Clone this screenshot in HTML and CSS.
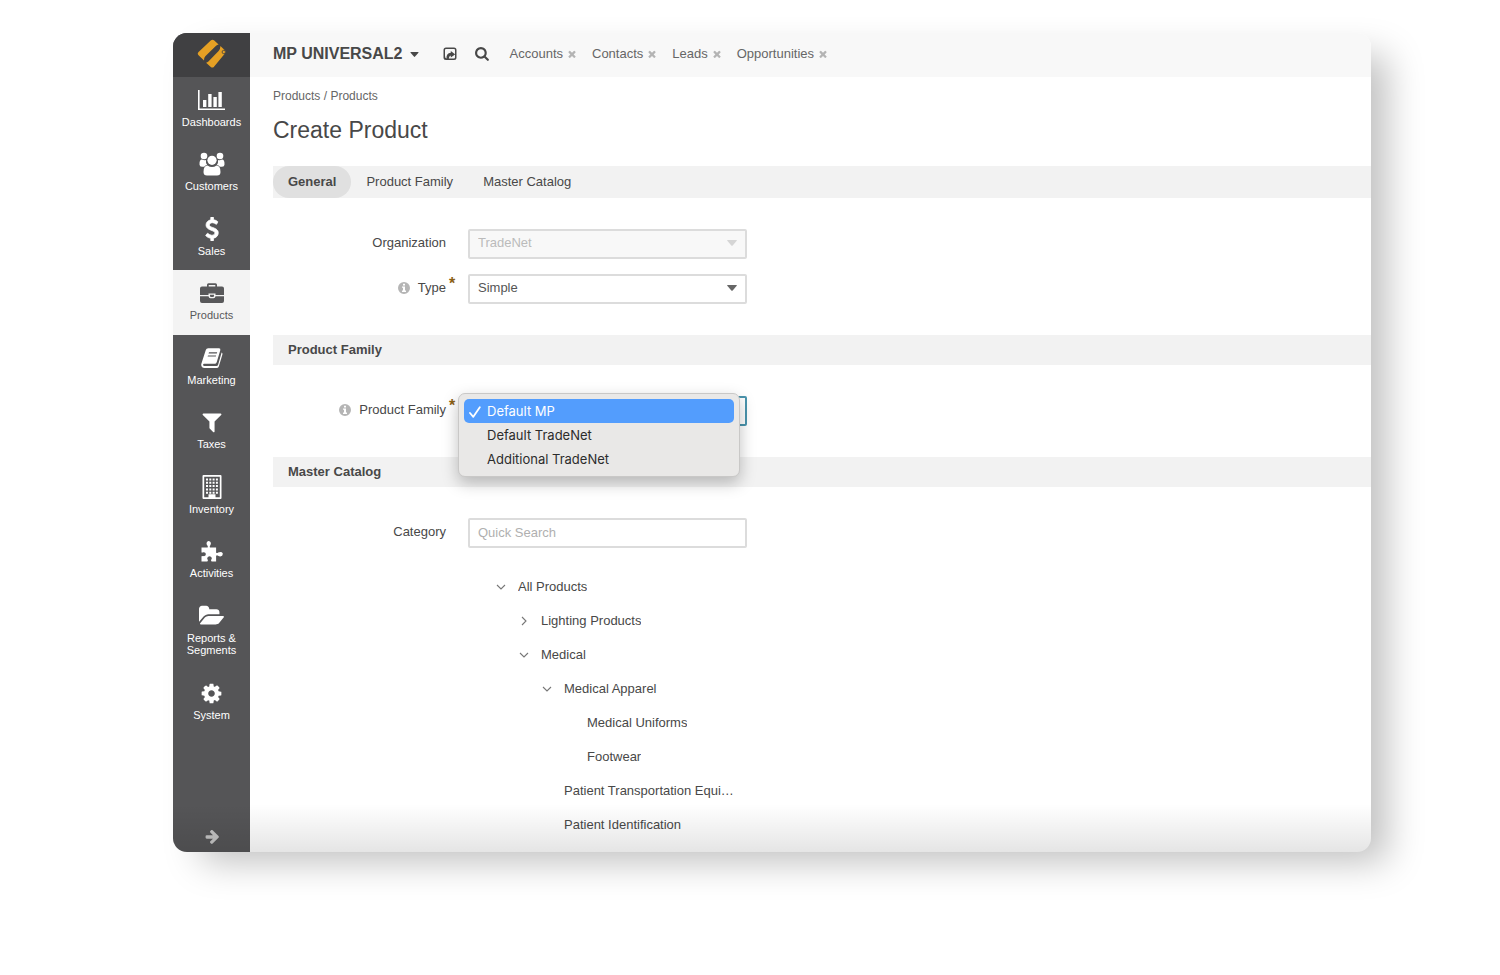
FILE: index.html
```html
<!DOCTYPE html>
<html lang="en">
<head>
<meta charset="utf-8">
<title>Create Product</title>
<link rel="stylesheet" href="styles.css">
</head>
<body>
<svg class="sprite" aria-hidden="true">
  <symbol id="times" viewBox="240 240 1310 1310"><path d="M1490 1322q0 40-28 68l-136 136q-28 28-68 28t-68-28l-294-294-294 294q-28 28-68 28t-68-28l-136-136q-28-28-28-68t28-68l294-294-294-294q-28-28-28-68t28-68l136-136q28-28 68-28t68 28l294 294 294-294q28-28 68-28t68 28l136 136q28 28 28 68t-28 68l-294 294 294 294q28 28 28 68z"/></symbol>
  <symbol id="caret" viewBox="0 0 10 6"><path d="M.7 0h8.6q.9 0 .4.8L5.7 5.5q-.7.7-1.4 0L.3.8Q-.2 0 .7 0z"/></symbol>
  <symbol id="info" viewBox="0 0 12 12"><path fill-rule="evenodd" d="M6 0a6 6 0 1 1 0 12A6 6 0 0 1 6 0zM5 1.8v1.700h2V1.800zM4 4.600v1.200h1v2.800H4v1.300h4V8.600H7v-4z"/></symbol>
  <symbol id="down" viewBox="0 0 10 10"><path d="M1 3l4 4 4-4" fill="none" stroke="currentColor" stroke-width="1.100"/></symbol>
  <symbol id="right" viewBox="0 0 10 10"><path d="M3 1l4 4-4 4" fill="none" stroke="currentColor" stroke-width="1.100"/></symbol>
</svg>
<div class="app">
  <aside class="sidebar">
    <a class="logo" href="#" aria-label="Home">
      <svg width="30" height="30" viewBox="0 0 30 30"><path fill="#e5a024" d="M1.300 13.200L14 1.300q1.500-1 3 0l4.600 4.200q-1.600.3-2.800 1.600L8.300 17.300q-1.700 2-1.300 4.200L1.300 16.100q-1.200-1.400 0-2.900z"/><path fill="#e5a024" d="M23.400 7l4.700 4.600q1 1.300 0 2.700L16.800 27.900q-1.500 1.300-3 0l-4.700-4.200q1.300-.3 2.300-1.300l10.200-10.500q1.900-2.200 1.800-4.900z"/><circle cx="26.800" cy="13" r="1.700" fill="#e5a024" stroke="#404042" stroke-width=".8"/></svg>
    </a>
    <nav>
      <ul class="menu">
        <li><a href="#"><svg width="27" height="20" viewBox="0 0 27 20"><path d="M0 0h1.600v18.400H27V20H0zM5 10h3.400v7H5zM10.200 4h3.400v13h-3.400zM15.400 7h3.400v10h-3.400zM20.400 2h3.400v15h-3.400z"/></svg><span>Dashboards</span></a></li>
        <li><a href="#"><svg width="26" height="24" viewBox="0 0 26 24"><circle cx="5" cy="4" r="3.300"/><circle cx="21" cy="4" r="3.300"/><path d="M.5 12.500Q.3 7.500 3 7.500q2 1 4 .4-.5 3 1.200 5.100-2 .2-3 1.700H3Q.5 14.700.5 12.500zM25.500 12.500q.2-5-2.500-5-2 1-4 .4.500 3-1.200 5.100 2 .2 3 1.700H23q2.500 0 2.500-2.200z"/><circle cx="13" cy="8.300" r="4.600"/><path d="M4.500 20q0-6.500 4-6.500 4.500 3 9 0 4 0 4 6.500 0 3.500-3.500 3.500H8q-3.500 0-3.500-3.500z"/></svg><span>Customers</span></a></li>
        <li><a href="#"><svg width="24" height="24" viewBox="0 0 1792 1792"><path stroke="currentColor" stroke-width="60" d="M1362 1185q0 153-99.500 263.500t-258.500 136.500v175q0 14-9 23t-23 9h-135q-13 0-22.500-9.500t-9.500-22.500v-175q-66-9-127.500-31t-101.500-44.500-74-48-46.500-37.500-17.500-18q-17-21-2-41l103-135q7-10 23-12 15-2 24 9l2 2q113 99 243 125 37 8 74 8 81 0 142.500-43t61.500-122q0-28-15-53t-33.500-42-58.500-37.500-66-32-80-32.500q-39-16-61.500-25t-61.500-26.500-62.500-31-56.500-35.500-53.500-42.500-43.500-49-35.500-58-21-66.500-8.500-78q0-138 98-242t255-134v-180q0-13 9.500-22.500t22.500-9.500h135q14 0 23 9t9 23v176q57 6 110.500 23t87 33.500 63.500 37.500 39 29 15 14q17 18 5 38l-81 146q-8 15-23 16-14 3-27-7-3-3-14.500-12t-39-26.500-58.500-32-74.500-26-85.500-11.500q-95 0-155 43t-60 111q0 26 8.500 48t29.500 41.500 39.500 33 56 31 60.500 27 70 27.500q53 20 81 31.500t76 35 75.500 42.500 62 50 53 63.500 31.500 76.500 13 94z"/></svg><span>Sales</span></a></li>
        <li><a href="#" class="active" aria-current="page"><svg width="24" height="20" viewBox="0 0 24 20"><path fill-rule="evenodd" d="M7 3.500V1.800Q7 .3 8.500.3h7q1.500 0 1.500 1.500v1.700h5q2 0 2 2V12h-8.500v-1.500h-7V12H0V5.500q0-2 2-2zm1.700 0h6.600V2H8.700zM0 13.200h8.500q.3 2 2 2h3q1.700 0 2-2H24V18q0 2-2 2H2q-2 0-2-2zM10 11.700h4V13q0 1-1 1h-2q-1 0-1-1z"/></svg><span>Products</span></a></li>
        <li><a href="#"><svg width="22" height="20" viewBox="0 0 22 20"><path fill-rule="evenodd" d="M7.200.2H18q1.800.2 1.300 2l-3.600 12q-.5 1.600-2 1.600H3.200q-1.500 0-1 1.400.3.900 1.600.9h11.700q1.200 0 1.700-1.500L20.600 4.500q1.200.6.800 2l-3.600 12Q17.300 20 15.600 20H3.500Q.5 20 .2 17q0-1 .4-2L4.800 2Q5.300.3 7.200.2zm.8 4-.4 1.200h8.200l.4-1.200zM7 7.400l-.4 1.200h8.200l.4-1.200z"/></svg><span>Marketing</span></a></li>
        <li><a href="#"><svg width="24" height="24" viewBox="0 0 1792 1792"><path d="M1595 295q17 41-14 70l-493 493v742q0 42-39 59-13 5-25 5-27 0-45-19l-256-256q-19-19-19-45v-486l-493-493q-31-29-14-70 17-39 59-39h1280q42 0 59 39z"/></svg><span>Taxes</span></a></li>
        <li><a href="#"><svg width="20" height="24" viewBox="0 0 20 24"><path fill-rule="evenodd" d="M1.500 0h17q1 0 1 1v22q0 1-1 1h-17q-1 0-1-1V1q0-1 1-1zM2.200 1.700v20.600h4.300v-3h7v3h4.300V1.700z"/><path fill="none" stroke="currentColor" stroke-width="2" stroke-dasharray="2 1.300" d="M4 4.500h13M4 7.800h13M4 11.100h13M4 14.400h13M4 17.700h13"/></svg><span>Inventory</span></a></li>
        <li><a href="#"><svg width="22" height="22" viewBox="0 0 22 22"><path d="M.5 7.500h6q.8-.7-.3-2.200Q5 3.500 6 2q1.500-1.800 3.200-.2Q10.500 3.400 9.300 5.300q-1 1.500-.2 2.200h6v5q.7 1 2 0 3.500-1.500 4.600.8.500 3-2.400 3.300-1.300 0-2.200-.8-1.400-1-2 .2v5.500h-4.400q-1.200-.8-.2-2.200.8-1.300-.6-2.500-1.600-1-3 .2-1.200 1.200-.3 2.500.7 1.400-.4 2H.5v-5.200q1-.2 1.800-.2 2.600.4 2.600-2.100-.4-2.200-2.600-1.800-1 .4-1.800.2z"/></svg><span>Activities</span></a></li>
        <li><a href="#"><svg width="25" height="24" viewBox="0 0 1879 1792"><path d="M1879 952q0 31-31 66l-336 396q-43 51-120.500 86.500t-143.500 35.500h-1088q-34 0-60.500-13t-26.500-43q0-31 31-66l336-396q43-51 120.500-86.500t143.500-35.500h1088q34 0 60.500 13t26.500 43zm-343-344v160h-832q-94 0-197 47.500t-164 119.500l-337 396-5 6q0-4-.5-12.500t-.5-12.500v-960q0-92 66-158t158-66h320q92 0 158 66t66 158v32h544q92 0 158 66t66 158z"/></svg><span>Reports &amp; Segments</span></a></li>
        <li><a href="#"><svg width="23" height="23" viewBox="0 0 1792 1792"><path d="M1152 896q0-106-75-181t-181-75-181 75-75 181 75 181 181 75 181-75 75-181zm512-109v222q0 12-8 23t-20 13l-185 28q-19 54-39 91 35 50 107 138 10 12 10 25t-9 23q-27 37-99 108t-94 71q-12 0-26-9l-138-108q-44 23-91 38-16 136-29 186-7 28-36 28h-222q-14 0-24.500-8.500t-11.500-21.500l-28-184q-49-16-90-37l-141 107q-10 9-25 9-14 0-25-11-126-114-165-168-7-10-7-23 0-12 8-23 15-21 51-66.500t54-70.500q-27-50-41-99l-183-27q-13-2-21-12.500t-8-23.500v-222q0-12 8-23t19-13l186-28q14-46 39-92-40-57-107-138-10-12-10-24 0-10 9-23 26-36 98.500-107.500t94.500-71.500q13 0 26 10l138 107q44-23 91-38 16-136 29-186 7-28 36-28h222q14 0 24.500 8.500t11.500 21.500l28 184q49 16 90 37l142-107q9-9 24-9 13 0 25 10 129 119 165 170 7 8 7 22 0 12-8 23-15 21-51 66.500t-54 70.500q26 50 41 98l183 28q13 2 21 12.500t8 23.500z"/></svg><span>System</span></a></li>
      </ul>
    </nav>
    <button class="expand" type="button" aria-label="Expand menu"><svg width="14" height="14" viewBox="60 190 1560 1560"><path d="M1600 960q0 54-37 91l-651 651q-39 37-91 37-51 0-90-37l-75-75q-38-38-38-91t38-91l293-293h-704q-52 0-84.500-37.500t-32.500-90.500v-128q0-53 32.500-90.500t84.500-37.500h704l-293-294q-38-36-38-90t38-90l75-75q38-38 90-38 53 0 91 38l651 651q37 35 37 90z"/></svg></button>
  </aside>

  <div class="content">
    <header class="topbar">
      <button class="org" type="button">MP UNIVERSAL2 <svg width="9" height="5"><use href="#caret"/></svg></button>
      <button class="tool" type="button" aria-label="Shortcuts"><svg width="14" height="14" viewBox="0 0 14 14"><path fill-rule="evenodd" d="M3 .5h8Q13.500.5 13.500 3v7.500q0 2.500-2.500 2.500H3Q.5 13 .5 10.500V3Q.5.500 3 .500zM3 2Q2 2 2 3v6q0 2 1.500 2.500Q3 6.500 7.800 5.800V4L12 7.200V3q0-1-1-1zM5.200 11.500h.6Q6 9 7.800 8.600v2L12 7.400v3.100q0 1-1 1z"/></svg></button>
      <button class="tool" type="button" aria-label="Search"><svg width="14" height="14" viewBox="60 120 1680 1680"><path d="M1216 832q0-185-131.500-316.500t-316.500-131.500-316.500 131.500-131.500 316.500 131.500 316.500 316.500 131.500 316.500-131.500 131.500-316.500zm512 832q0 52-38 90t-90 38q-54 0-90-38l-343-342q-179 124-399 124-143 0-273.500-55.500t-225-150-150-225-55.500-273.500 55.500-273.500 150-225 225-150 273.500-55.500 273.500 55.500 225 150 150 225 55.500 273.500q0 220-124 399l343 343q37 37 37 90z"/></svg></button>
      <ul class="pins">
        <li><a href="#">Accounts</a><button type="button" aria-label="Remove Accounts"><svg width="8" height="8"><use href="#times"/></svg></button></li>
        <li><a href="#">Contacts</a><button type="button" aria-label="Remove Contacts"><svg width="8" height="8"><use href="#times"/></svg></button></li>
        <li><a href="#">Leads</a><button type="button" aria-label="Remove Leads"><svg width="8" height="8"><use href="#times"/></svg></button></li>
        <li><a href="#">Opportunities</a><button type="button" aria-label="Remove Opportunities"><svg width="8" height="8"><use href="#times"/></svg></button></li>
      </ul>
    </header>

    <main class="page">
      <div class="crumbs"><a href="#">Products</a> / <a href="#">Products</a></div>
      <h1>Create Product</h1>
      <nav class="tabs">
        <a href="#general" class="current">General</a>
        <a href="#family">Product Family</a>
        <a href="#catalog">Master Catalog</a>
      </nav>
      <form>
        <section class="fields" id="general">
          <div class="field">
            <div class="label"><label for="organization">Organization</label></div>
            <div class="control">
              <select id="organization" disabled><option>TradeNet</option></select>
              <svg class="arrow" width="10" height="6"><use href="#caret"/></svg>
            </div>
          </div>
          <div class="field">
            <div class="label"><svg class="hint" width="12" height="12"><use href="#info"/></svg><label for="type">Type</label><em>*</em></div>
            <div class="control">
              <select id="type"><option>Simple</option></select>
              <svg class="arrow" width="10" height="6"><use href="#caret"/></svg>
            </div>
          </div>
        </section>

        <h2>Product Family</h2>
        <section class="fields" id="family">
          <div class="field">
            <div class="label"><svg class="hint" width="12" height="12"><use href="#info"/></svg><label for="product-family">Product Family</label><em>*</em></div>
            <div class="control">
              <select id="product-family" class="open"><option>Default MP</option><option>Default TradeNet</option><option>Additional TradeNet</option></select>
              <ul class="popup" role="listbox" aria-label="Product Family">
                <li role="option" aria-selected="true"><svg width="12" height="12" viewBox="0 0 12 12"><path d="M1 7l3.300 3.800L10.800 1.200" fill="none" stroke="currentColor" stroke-width="1.800" stroke-linecap="round" stroke-linejoin="round"/></svg>Default MP</li>
                <li role="option" aria-selected="false">Default TradeNet</li>
                <li role="option" aria-selected="false">Additional TradeNet</li>
              </ul>
            </div>
          </div>
        </section>

        <h2>Master Catalog</h2>
        <section class="fields last" id="catalog">
          <div class="field">
            <div class="label"><label for="category">Category</label></div>
            <div class="control"><input id="category" type="text" placeholder="Quick Search"></div>
          </div>
          <div class="field">
            <ul class="tree">
              <li><div class="node"><svg width="10" height="10"><use href="#down"/></svg><a href="#">All Products</a></div>
                <ul>
                  <li><div class="node"><svg width="10" height="10"><use href="#right"/></svg><a href="#">Lighting Products</a></div></li>
                  <li><div class="node"><svg width="10" height="10"><use href="#down"/></svg><a href="#">Medical</a></div>
                    <ul>
                      <li><div class="node"><svg width="10" height="10"><use href="#down"/></svg><a href="#">Medical Apparel</a></div>
                        <ul>
                          <li><div class="node leaf"><a href="#">Medical Uniforms</a></div></li>
                          <li><div class="node leaf"><a href="#">Footwear</a></div></li>
                        </ul>
                      </li>
                      <li><div class="node leaf"><a href="#">Patient Transportation Equi…</a></div></li>
                      <li><div class="node leaf"><a href="#">Patient Identification</a></div></li>
                    </ul>
                  </li>
                </ul>
              </li>
            </ul>
          </div>
        </section>
      </form>
    </main>
  </div>
</div>
</body>
</html>
```
FILE: styles.css
```css
* { box-sizing: border-box; }

body {
  display: flex;
  min-height: 100vh;
  margin: 0;
  padding: 33px 129px 123px 173px;
  background: #fff;
  color: #484848;
  font: 13px/16px "Liberation Sans", Arial, sans-serif;
}

ul { margin: 0; padding: 0; list-style: none; }
a { color: inherit; text-decoration: none; }
svg { display: block; flex: none; fill: currentColor; }

button {
  margin: 0;
  padding: 0;
  border: 0;
  background: none;
  color: inherit;
  font: inherit;
}

.sprite { position: absolute; width: 0; height: 0; }

.app {
  position: relative;
  display: flex;
  flex: 1;
  min-width: 0;
  overflow: hidden;
  border-radius: 14px;
  background: #fff;
  box-shadow: 22px 16px 36px -6px rgba(0, 0, 0, .25);
}

.app::after {
  content: "";
  position: absolute;
  inset: auto 0 0;
  height: 48px;
  background: linear-gradient(transparent, rgba(0, 0, 0, .1));
  pointer-events: none;
}

/* Sidebar */
.sidebar {
  display: flex;
  flex: none;
  flex-direction: column;
  width: 77px;
  background: #555557;
  color: #fff;
}

.logo {
  display: flex;
  align-items: center;
  justify-content: center;
  height: 44px;
  padding-bottom: 2px;
  background: #404042;
}

.menu {
  display: grid;
  grid-template-rows: repeat(4, 64px 65px) 77px 64px;
}

.menu a {
  display: grid;
  grid-template-rows: 24px auto;
  row-gap: 4px;
  align-content: start;
  place-items: center;
  height: 100%;
  padding: 11px 8px 0;
  font-size: 11px;
  line-height: 12px;
  text-align: center;
}

.menu .active { background: #f3f3f3; color: #58585a; }

.expand {
  display: flex;
  justify-content: center;
  margin-top: auto;
  padding-bottom: 8px;
  color: #c4c4c4;
}

/* Header */
.content { flex: 1; min-width: 0; }

.topbar {
  display: flex;
  align-items: center;
  height: 44px;
  padding: 0 23px 2px;
  background: #f8f8f8;
}

.org {
  display: flex;
  align-items: center;
  gap: 7px;
  margin-right: 6px;
  font-size: 16px;
  font-weight: 700;
}

.tool { margin-left: 18px; }

.pins { display: flex; gap: 16px; margin-left: 21px; }
.pins li { display: flex; align-items: center; gap: 5px; color: #666; }
.pins button { color: #b4b4b4; }

/* Page */
.page { padding: 11px 0 0 23px; }
.crumbs { color: #666; font-size: 12px; }
h1 { margin: 12px 0 22px; font-size: 23px; line-height: 28px; font-weight: 400; }

.tabs { display: flex; background: #f2f2f2; }
.tabs a { padding: 8px 15px; border-radius: 16px; }
.tabs .current { background: #e0e0e0; font-weight: 700; }

h2 {
  margin: 0;
  padding: 7px 15px;
  background: #f2f2f2;
  font-size: 13px;
  line-height: 16px;
}

.fields {
  display: grid;
  gap: 15px;
  padding: 31px 0;
}

.fields.last { padding-bottom: 8px; }

.field {
  display: grid;
  grid-template-columns: 173px minmax(0, 279px);
  column-gap: 22px;
}

.label {
  position: relative;
  display: flex;
  align-items: center;
  justify-content: flex-end;
  gap: 8px;
  height: 28px;
}

.label em {
  position: absolute;
  left: 100%;
  top: 2px;
  margin-left: 3px;
  color: #8a6014;
  font-size: 16px;
  font-style: normal;
  font-weight: 700;
}

.hint { color: #b5b5b5; }
.control { position: relative; }

.control select,
.control input {
  display: block;
  width: 100%;
  height: 30px;
  margin: 0;
  padding: 0 8px 2px;
  border: 2px solid #dcdcdc;
  border-radius: 2px;
  outline: 0;
  appearance: none;
  background: #fff;
  color: #555;
  font: inherit;
}

.control select:disabled { background: #f8f8f8; color: #bbb; opacity: 1; }
.control select:disabled + .arrow { color: #d5d5d5; }
.control select.open { border-color: #4a94ad; }
.control input::placeholder { color: #b0b0b0; }

.arrow {
  position: absolute;
  right: 10px;
  top: 11px;
  color: #666;
  pointer-events: none;
}

.popup {
  position: absolute;
  z-index: 1;
  left: -10px;
  right: 7px;
  top: -3px;
  padding: 5px;
  border: 1px solid #c9c8c7;
  border-radius: 7px;
  background: #e9e8e7;
  box-shadow: 0 6px 16px rgba(0, 0, 0, .25);
  color: #2c2c2c;
  font: 13px/24px Inter, sans-serif;
}

.popup li { position: relative; padding-left: 23px; border-radius: 5px; }
.popup [aria-selected="true"] { background: #539dfd; color: #fff; }
.popup svg { position: absolute; left: 5px; top: 7px; }

/* Category tree */
.tree { grid-column: 2; padding: 7px 9px 0 28px; }
.tree ul { padding-left: 23px; }
.tree svg { color: #777; }
.node { display: flex; align-items: center; gap: 12px; height: 34px; }
.leaf { padding-left: 22px; }
.node a { overflow: hidden; text-overflow: ellipsis; white-space: nowrap; }
```
